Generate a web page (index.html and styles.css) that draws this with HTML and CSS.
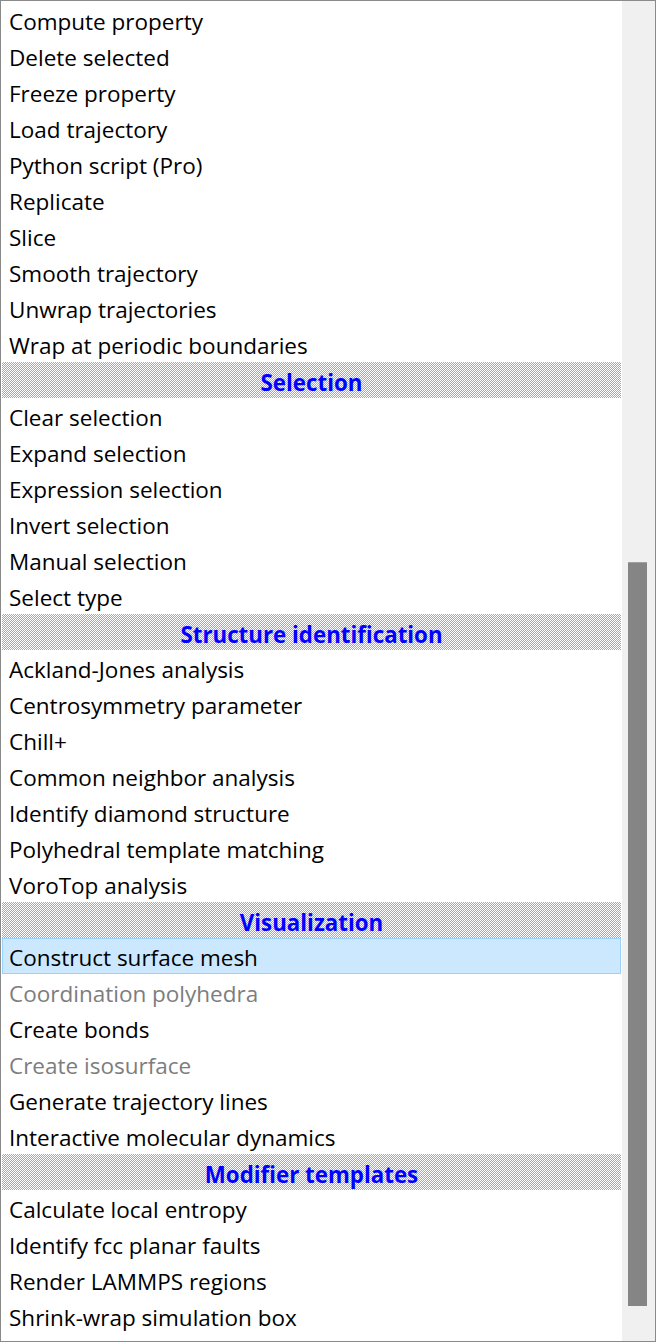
FILE: index.html
```html
<!DOCTYPE html>
<html>
<head>
<meta charset="utf-8">
<link rel="stylesheet" href="styles.css">
</head>
<body>
<div class="panel">
  <ul class="list">
    <li class="item">Compute property</li>
    <li class="item">Delete selected</li>
    <li class="item">Freeze property</li>
    <li class="item">Load trajectory</li>
    <li class="item">Python script (Pro)</li>
    <li class="item">Replicate</li>
    <li class="item">Slice</li>
    <li class="item">Smooth trajectory</li>
    <li class="item">Unwrap trajectories</li>
    <li class="item">Wrap at periodic boundaries</li>
    <li class="header">Selection</li>
    <li class="item">Clear selection</li>
    <li class="item">Expand selection</li>
    <li class="item">Expression selection</li>
    <li class="item">Invert selection</li>
    <li class="item">Manual selection</li>
    <li class="item">Select type</li>
    <li class="header">Structure identification</li>
    <li class="item">Ackland-Jones analysis</li>
    <li class="item">Centrosymmetry parameter</li>
    <li class="item">Chill+</li>
    <li class="item">Common neighbor analysis</li>
    <li class="item">Identify diamond structure</li>
    <li class="item">Polyhedral template matching</li>
    <li class="item">VoroTop analysis</li>
    <li class="header">Visualization</li>
    <li class="item selected">Construct surface mesh</li>
    <li class="item disabled">Coordination polyhedra</li>
    <li class="item">Create bonds</li>
    <li class="item disabled">Create isosurface</li>
    <li class="item">Generate trajectory lines</li>
    <li class="item">Interactive molecular dynamics</li>
    <li class="header">Modifier templates</li>
    <li class="item">Calculate local entropy</li>
    <li class="item">Identify fcc planar faults</li>
    <li class="item">Render LAMMPS regions</li>
    <li class="item">Shrink-wrap simulation box</li>
  </ul>
  <div class="scrollbar">
    <div class="thumb"></div>
  </div>
</div>
</body>
</html>
```

FILE: styles.css
```css
html, body {
  margin: 0;
  padding: 0;
  background: #ffffff;
}

.panel {
  box-sizing: border-box;
  width: 656px;
  height: 1342px;
  border: 1px solid #8a8a8a;
  display: flex;
  overflow: hidden;
  background: #ffffff;
}

.list {
  list-style: none;
  margin: 0;
  padding: 1px 0 0 1px;
  width: 619px;
  flex: none;
  font-family: "Open Sans", "Noto Sans", sans-serif;
  font-size: 22.5px;
}

.item, .header {
  box-sizing: border-box;
  height: 36px;
  line-height: 36px;
  white-space: nowrap;
  overflow: hidden;
}

.item {
  padding-top: 2px;
  padding-left: 7px;
  color: #000000;
}

.item.disabled {
  color: #7d7d7d;
}

.item.selected {
  background: #cce8ff;
  border: 1px solid #99d1ff;
  padding-top: 1px;
  padding-left: 6px;
  line-height: 36px;
}

.header {
  padding-top: 3px;
  text-align: center;
  color: #0000ff;
  font-weight: 700;
  font-size: 22.3px;
  background: repeating-conic-gradient(#a8a8a8 0% 25%, #ffffff 0% 50%) 0 0 / 2px 2px;
}

.scrollbar {
  flex: none;
  width: 34px;
  margin-left: 1px;
  background: #f0f0f0;
  display: flex;
  flex-direction: column;
  padding-top: 561px;
  box-sizing: border-box;
}

.thumb {
  margin-left: 6px;
  width: 19px;
  height: 744px;
  background: #858585;
  border-top: 1px solid #a0a0a0;
  box-sizing: border-box;
}
```
